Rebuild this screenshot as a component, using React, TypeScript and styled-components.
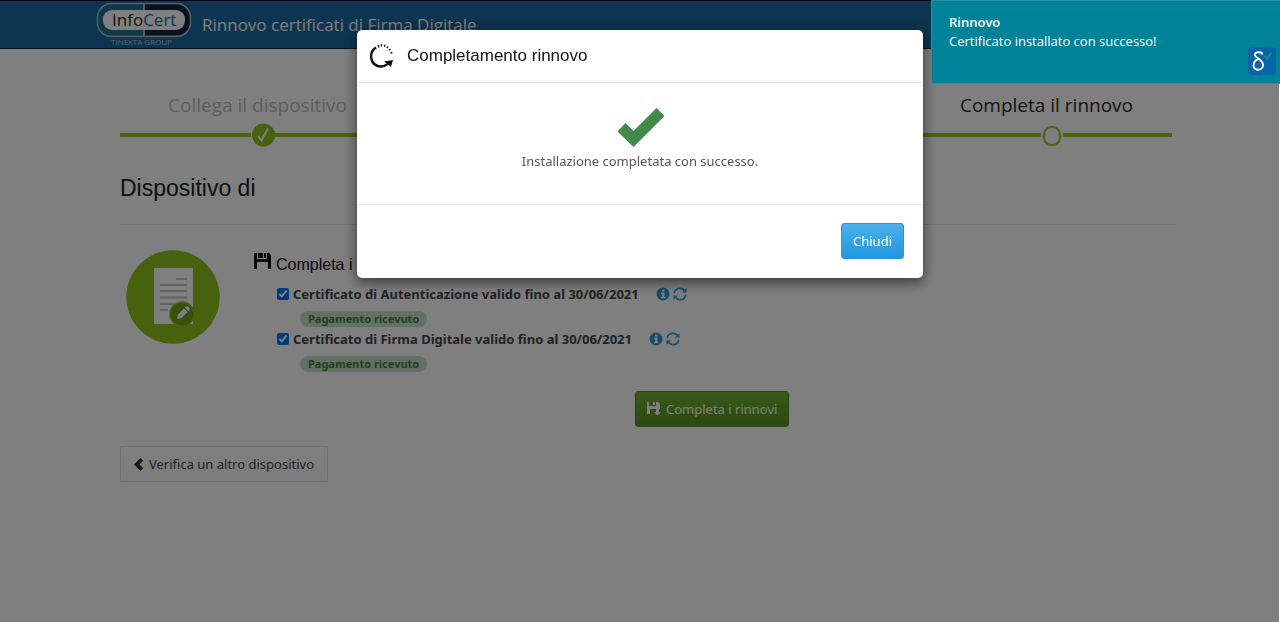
import React from 'react';
import styled, { createGlobalStyle } from 'styled-components';

const GlobalStyle = createGlobalStyle`
  * { box-sizing: border-box; }
  body { margin: 0; background: #fff; color: #555; font: 13px/20px "Noto Sans", sans-serif; }
  h1, h2, h3, p, ol, ul { margin: 0; padding: 0; font-weight: 400; list-style: none; }
  button, input { font-family: inherit; }
  svg { display: block; flex: none; }
`;

const Page = styled.div`
  min-height: 100vh;
`;

const TopBar = styled.header`
  display: flex;
  align-items: flex-start;
  gap: 10px;
  height: 49px;
  padding-left: 96px;
  background: #1b69a0;
  border-top: 1px solid #000428;
  border-bottom: 1px solid #10253c;
`;

const AppTitle = styled.h1`
  padding-top: 12px;
  font: 17px/24px "Open Sans", sans-serif;
  color: #fff;
`;

const Main = styled.main`
  padding: 44px 104px 0 120px;
`;

const Steps = styled.ol`
  display: grid;
  grid-template-columns: repeat(4, 1fr);
  margin-right: 4px;
`;

const Step = styled.li`
  display: flex;
  flex-direction: column;
  height: 56px;
`;

const StepLabel = styled.span<{ $active?: boolean }>`
  height: 28px;
  padding-left: 12px;
  font: 19px/24px "Open Sans", sans-serif;
  text-align: center;
  color: ${(p) => (p.$active ? '#2a2a2a' : '#bbb')};
`;

const Track = styled.span`
  display: flex;
  align-items: center;
  height: 30px;
`;

const Rail = styled.span<{ $lead?: boolean }>`
  flex: ${(p) => (p.$lead ? '1 1 22px' : '1 1 0')};
  height: 4px;
  background: #9bc62c;
`;

const DeviceTitle = styled.h2`
  padding-bottom: 21px;
  margin: 24px 0 24px;
  border-bottom: 1px solid #e2e2e2;
  font: 23px/30px "Liberation Sans", sans-serif;
  color: #222;
`;

const Device = styled.section`
  display: flex;
  gap: 36px;
  padding-left: 5px;
`;

const Renewals = styled.div`
  flex: 1;
`;

const RenewTitle = styled.h3`
  display: flex;
  gap: 5px;
  margin-left: -3px;
  height: 35px;
  padding-top: 4px;
  font: 16px/24px "Liberation Sans", sans-serif;
  color: #111;
`;

const Certificate = styled.li`
  height: 45px;
  padding-left: 20px;
`;

const CertLine = styled.div`
  display: flex;
  align-items: center;
  height: 20px;
`;

const CertLabel = styled.label`
  display: flex;
  align-items: center;
  gap: 4px;
  margin-right: 17px;
  font-weight: 700;
  color: #444;
`;

const Tick = styled.input`
  width: 12px;
  height: 12px;
  margin: 0;
  accent-color: #0075ff;
`;

const IconButton = styled.button`
  padding: 0;
  margin-right: 3px;
  border: 0;
  background: none;
`;

const Badge = styled.span`
  display: inline-block;
  margin: 7px 0 0 23px;
  padding: 0 8px;
  border-radius: 8px;
  background: #c8e0c6;
  color: #3e8442;
  font-weight: 700;
  font-size: 11px;
  line-height: 16px;
  vertical-align: top;
`;

const Button = styled.button<{ $kind: 'primary' | 'success' | 'plain' }>`
  display: inline-flex;
  align-items: center;
  gap: 5px;
  height: 36px;
  padding: 0 11px;
  border-radius: ${(p) => (p.$kind === 'plain' ? 1 : 3)}px;
  font-size: 13px;
  line-height: 20px;
  ${(p) => p.$kind === 'primary' && 'background: linear-gradient(#4cb0ea, #1f97df); border: 1px solid #2a97d8; color: #fff;'}
  ${(p) => p.$kind === 'success' && 'background: linear-gradient(#74b52f, #529120); border: 1px solid #508c20; color: #fff;'}
  ${(p) => p.$kind === 'plain' && 'padding: 0 13px 0 12px; background: linear-gradient(#fff, #f8f8f8); border: 1px solid #ddd; color: #444;'}
`;

const RenewActions = styled.div`
  padding: 17px 0 0 378px;
`;

const BackRow = styled.div`
  padding-top: 19px;
`;

const Overlay = styled.div`
  position: fixed;
  inset: 0 1px 0 0;
  padding: 30px 0 0 1px;
  background: rgba(0, 0, 0, 0.5);
`;

const Dialog = styled.section`
  width: 566px;
  max-width: 96%;
  margin: 0 auto;
  border-radius: 5px;
  background: #fff;
  box-shadow: 0 4px 14px rgba(0, 0, 0, 0.6);
`;

const DialogHeader = styled.header`
  display: flex;
  align-items: center;
  gap: 12px;
  height: 53px;
  padding: 0 12px;
  border-bottom: 1px solid #e5e5e5;
`;

const DialogTitle = styled.h2`
  font: 17px/24px "Liberation Sans", sans-serif;
  color: #111;
`;

const DialogBody = styled.div`
  display: flex;
  flex-direction: column;
  align-items: center;
  gap: 4px;
  height: 121px;
  padding-top: 25px;
`;

const DialogFooter = styled.footer`
  display: flex;
  justify-content: flex-end;
  padding: 18px 19px 19px;
  border-top: 1px solid #e5e5e5;
`;

const Toast = styled.aside`
  position: fixed;
  top: 0;
  right: 0;
  display: flex;
  justify-content: space-between;
  width: 349px;
  height: 84px;
  padding: 11px 4px 8px 17px;
  border: solid #1f93aa;
  border-width: 1px 0 1px 1px;
  background: #008299;
  color: #fff;
  font-family: "Open Sans", sans-serif;
`;

const ToastTitle = styled.strong`
  display: block;
  font-weight: 600;
`;

const ToastText = styled.p`
  line-height: 18px;
`;

const ToastIcon = styled.span`
  align-self: flex-end;
`;

const Logo = () => (
  <svg width="96" height="46" viewBox="0 0 96 46" role="img" aria-label="InfoCert Tinexta Group">
    <path d="M48 3H17Q2 3 2 18v2Q2 34 17 34H48z" fill="#1b718f" />
    <path d="M48 3h31q15 0 15 15v2q0 14-15 14H48z" fill="#13203c" />
    <rect x="1.500" y="2.500" width="93" height="33" rx="14" fill="none" stroke="#a9bfca" strokeWidth="1.500" />
    <rect x="7" y="9" width="82" height="20" rx="9" fill="#fff" />
    <path d="M48 3v6M48 29v6" stroke="#d5dde2" strokeWidth="1.500" />
    <text x="16" y="25" fontFamily="Open Sans" fontSize="17" fill="#222">Info<tspan fill="#19719d">Cert</tspan></text>
    <text x="15" y="44" fontFamily="Open Sans" fontSize="8" fill="#b9cbd6">TINEXTA GROUP</text>
  </svg>
);

const DoneMark = () => (
  <svg width="24" height="26" viewBox="0 0 24 26">
    <circle cx="12.500" cy="13" r="11.500" fill="#8fc31f" />
    <path d="M7 14l3.500 4.500L17 6.500" fill="none" stroke="#fff" strokeWidth="2" />
  </svg>
);

const OpenMark = () => (
  <svg width="22" height="26" viewBox="0 0 22 26">
    <rect x="3" y="5" width="16" height="18" rx="7.500" fill="#fff" stroke="#9bc62c" strokeWidth="2.200" />
  </svg>
);

const DocumentIcon = () => (
  <svg width="96" height="96" viewBox="0 0 96 96">
    <circle cx="48" cy="48" r="46.700" fill="#8fc31f" />
    <path d="M29 19h39v56H29z" fill="#fff" />
    <path d="M51 30h11M35 36h27M35 42h27M35 48.500h27M35 55h14M35 61h8" stroke="#c4c4c4" strokeWidth="1.800" />
    <circle cx="57" cy="65" r="12" fill="#73a01b" stroke="#8fc31f" strokeWidth="1.500" />
    <path d="M52 70l1-4.500 6-6 3.500 3.500-6 6zM60 58.500l1-1q1-1 2 0l1.500 1.500q1 1 0 2l-1 1z" fill="#fff" />
  </svg>
);

const FloppyIcon = () => (
  <svg width="17" height="17" viewBox="0 0 17 17">
    <path d="M0 0h3v6h10V0h2l2 2v14h-3V9H3v7H0zM10 0h2v5h-2zM4 0h5v5H4z" fill="#111" />
  </svg>
);

const FloppySaveIcon = () => (
  <svg width="14" height="14" viewBox="0 0 14 14">
    <path d="M0 0h2v4h7V0h2l2 2v5H3v5H0zM6 0h2v3H6zM3 4h7v3H3zM9 7h3v3h2l-3.500 3.500L7 10h2z" fill="#fff" />
  </svg>
);

const InfoIcon = () => (
  <svg width="14" height="14" viewBox="0 0 14 14">
    <circle cx="7" cy="7" r="6.500" fill="#2a9bdd" />
    <path d="M6 2.500h2.500v2H6zM5 5.500h3.500V10H9.500v1.300H5V10h1V7H5z" fill="#fff" />
  </svg>
);

const RefreshIcon = () => (
  <svg width="14" height="14" viewBox="0 0 14 14">
    <path d="M1.200 6a5.800 5.500 0 0 1 10.300-2.500M12.800 8a5.800 5.500 0 0 1-10.300 2.500" fill="none" stroke="#2a9bdd" strokeWidth="1.600" />
    <path d="M13.500 1v4.500H9zM.5 13V8.500H5z" fill="#2a9bdd" />
  </svg>
);

const ChevronIcon = () => (
  <svg width="11" height="13" viewBox="0 0 11 13">
    <path d="M7.500 0l2.700 2.700-3.700 3.800 3.700 3.800L7.500 13 1 6.500z" fill="#333" />
  </svg>
);

const CheckIcon = () => (
  <svg width="48" height="39" viewBox="0 0 48 39">
    <path d="M1.500 23.500l8-8.500 8 8L40.500 0l8 8L17.500 39z" fill="#43894a" />
  </svg>
);

const ProgressIcon = () => (
  <svg width="26" height="26" viewBox="0 0 26 26">
    <path d="M7 4.500C-1 10 1 23 12 23.500q4 0 6.500-2.500" fill="none" stroke="#111" strokeWidth="2.400" />
    <path d="M15 18.500l9-1.500-2 7z" fill="#111" />
    <path d="M9 2l1 2.500M12.500 1.200v2.300M16 1.700l-.6 2M19 3.500l-1.200 1.600M21.500 6l-1.700 1.200M23.300 9.500l-1.800.6" stroke="#111" strokeWidth="1.400" />
  </svg>
);

const BrandIcon = () => (
  <svg width="28" height="28" viewBox="0 0 28 28">
    <rect width="28" height="28" rx="4" fill="#0865a5" />
    <path d="M14.500 7.500C14 4 5.500 4.500 7 8.500c1 2.500 8 4.500 8 9.500 0 6.500-9.500 6-9.500.500 0-4 3-6.500 6-6.500" fill="none" stroke="#fff" strokeWidth="2" />
    <path d="M16.500 9l2.500 2.500L23.500 6" fill="none" stroke="#168b82" strokeWidth="2" />
  </svg>
);

const steps = [
  { label: 'Collega il dispositivo', mark: <DoneMark /> },
  {},
  {},
  { label: 'Completa il rinnovo', mark: <OpenMark />, active: true },
];

const certificates = [
  'Certificato di Autenticazione valido fino al 30/06/2021',
  'Certificato di Firma Digitale valido fino al 30/06/2021',
];

export default function App() {
  return (
    <>
      <GlobalStyle />
      <Page>
        <TopBar>
          <Logo />
          <AppTitle>Rinnovo certificati di Firma Digitale</AppTitle>
        </TopBar>
        <Main>
          <Steps>
            {steps.map((step, i) => (
              <Step key={i}>
                <StepLabel $active={step.active}>{step.label}</StepLabel>
                <Track>
                  <Rail $lead />
                  {step.mark}
                  <Rail />
                </Track>
              </Step>
            ))}
          </Steps>
          <DeviceTitle>Dispositivo di</DeviceTitle>
          <Device>
            <DocumentIcon />
            <Renewals>
              <RenewTitle><FloppyIcon />Completa i rinnovi</RenewTitle>
              <ul>
                {certificates.map((name) => (
                  <Certificate key={name}>
                    <CertLine>
                      <CertLabel><Tick type="checkbox" defaultChecked />{name}</CertLabel>
                      <IconButton aria-label="Informazioni"><InfoIcon /></IconButton>
                      <IconButton aria-label="Aggiorna"><RefreshIcon /></IconButton>
                    </CertLine>
                    <Badge>Pagamento ricevuto</Badge>
                  </Certificate>
                ))}
              </ul>
              <RenewActions>
                <Button $kind="success"><FloppySaveIcon />Completa i rinnovi</Button>
              </RenewActions>
            </Renewals>
          </Device>
          <BackRow>
            <Button $kind="plain"><ChevronIcon />Verifica un altro dispositivo</Button>
          </BackRow>
        </Main>
      </Page>
      <Overlay>
        <Dialog role="dialog" aria-modal="true" aria-labelledby="dialog-title">
          <DialogHeader>
            <ProgressIcon />
            <DialogTitle id="dialog-title">Completamento rinnovo</DialogTitle>
          </DialogHeader>
          <DialogBody>
            <CheckIcon />
            <p>Installazione completata con successo.</p>
          </DialogBody>
          <DialogFooter>
            <Button $kind="primary">Chiudi</Button>
          </DialogFooter>
        </Dialog>
      </Overlay>
      <Toast role="status">
        <div>
          <ToastTitle>Rinnovo</ToastTitle>
          <ToastText>Certificato installato con successo!</ToastText>
        </div>
        <ToastIcon><BrandIcon /></ToastIcon>
      </Toast>
    </>
  );
}
